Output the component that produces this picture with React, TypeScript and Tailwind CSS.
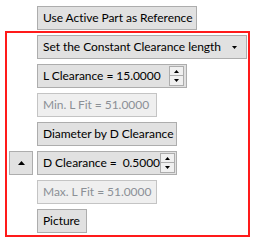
const font = "font-['Lato','Noto_Sans',sans-serif] text-[12px] leading-none tracking-[-0.05px]";

function Box({
  width,
  children,
  disabled = false,
}: {
  width: string;
  children: React.ReactNode;
  disabled?: boolean;
}) {
  return (
    <div
      className={`${width} h-[24px] flex items-center pl-[5px] border whitespace-pre ${
        disabled
          ? "bg-[#efefef] border-[#c4c4c4] text-[#8b9096]"
          : "bg-[#e1e1e1] border-[#adadad] text-black"
      }`}
    >
      {children}
    </div>
  );
}

function Spinner() {
  return (
    <div className="ml-auto mr-[2px] w-[15px] h-[20px] shrink-0 flex flex-col">
      <div className="h-[10px] border border-[#adadad] bg-[#f0f0f0] flex items-center justify-center">
        <Tri up size={5} />
      </div>
      <div className="h-[10px] border border-t-0 border-[#adadad] bg-[#f0f0f0] flex items-center justify-center">
        <Tri size={5} />
      </div>
    </div>
  );
}

function Tri({ up = false, size = 7 }: { up?: boolean; size?: number }) {
  const h = Math.ceil(size / 2);
  return (
    <svg width={size} height={h} viewBox={`0 0 ${size} ${h}`} aria-hidden="true">
      <polygon
        points={up ? `${size / 2} 0 ${size} ${h} 0 ${h}` : `0 0 ${size} 0 ${size / 2} ${h}`}
        fill="#000"
      />
    </svg>
  );
}

export default function App() {
  return (
    <div className={`w-[259px] h-[245px] bg-white pt-[6px] pl-[5px] ${font}`}>
      <div className="pl-[32px]">
        <Box width="w-[160px]">Use Active Part as Reference</Box>
      </div>
      <div className="mt-[1px] w-[245px] h-[206px] border-2 border-[#ff1a1a] pt-[2px] pl-[2px]">
        <div className="grid grid-cols-[24px_auto] gap-x-[4px] gap-y-[5px] justify-start">
          <div />
          <Box width="w-[210px]">
            Set the Constant Clearance length
            <span className="ml-auto mr-[9px] shrink-0 flex">
              <Tri size={5} />
            </span>
          </Box>
          <div />
          <Box width="w-[150px]">
            L Clearance = 15.0000
            <Spinner />
          </Box>
          <div />
          <Box width="w-[120px]" disabled>
            Min. L Fit = 51.0000
          </Box>
          <div />
          <Box width="w-[140px]">Diameter by D Clearance</Box>
          <div className="w-[24px] h-[24px] border border-[#adadad] bg-[#e1e1e1] flex items-center justify-center">
            <Tri up />
          </div>
          <Box width="w-[140px]">
            D Clearance =  0.5000
            <Spinner />
          </Box>
          <div />
          <Box width="w-[120px]" disabled>
            Max. L Fit = 51.0000
          </Box>
          <div />
          <Box width="w-[50px]">Picture</Box>
        </div>
      </div>
    </div>
  );
}
